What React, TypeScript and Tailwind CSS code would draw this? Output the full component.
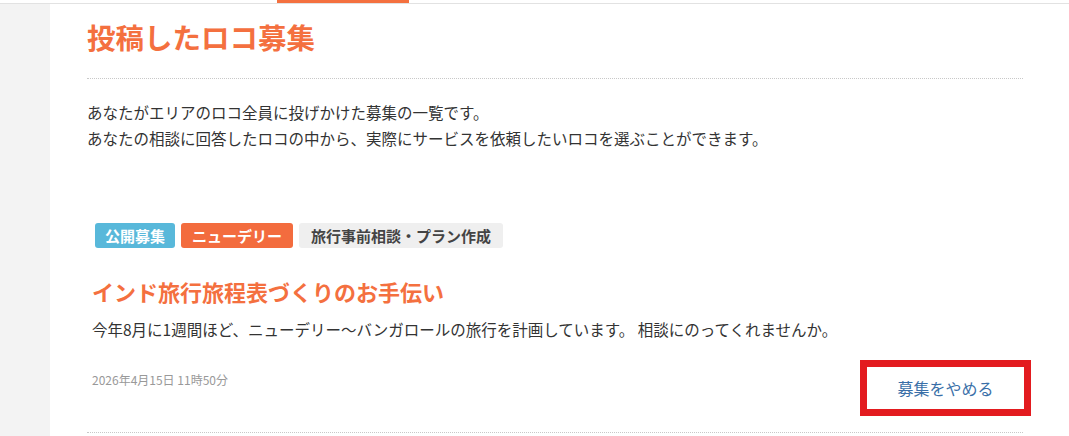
import { useState } from 'react';

type Post = {
  id: number;
  tags: { label: string; kind: 'public' | 'area' | 'category' }[];
  title: string;
  body: string;
  postedAt: string;
};

const posts: Post[] = [
  {
    id: 1,
    tags: [
      { label: '公開募集', kind: 'public' },
      { label: 'ニューデリー', kind: 'area' },
      { label: '旅行事前相談・プラン作成', kind: 'category' },
    ],
    title: 'インド旅行旅程表づくりのお手伝い',
    body: '今年8月に1週間ほど、ニューデリー〜バンガロールの旅行を計画しています。 相談にのってくれませんか。',
    postedAt: '2026年4月15日 11時50分',
  },
];

const tagStyle = {
  public: 'bg-[#58b8da] text-white px-[10px]',
  area: 'bg-[#f36c3e] text-white px-[11px]',
  category: 'bg-[#efefef] text-[#444] px-[12px]',
};

export default function App() {
  const [items, setItems] = useState(posts);

  return (
    <div
      className="min-h-[436px] bg-white text-[#333]"
      style={{ fontFamily: '"Noto Sans CJK JP", "Noto Sans", sans-serif' }}
    >
      {/* タブ下線 */}
      <div className="h-[3px] flex">
        <div className="ml-[277px] w-[132px] bg-[#f4703f]" />
      </div>
      <div className="h-px bg-[#e2e2e2]" />

      <div className="flex">
        <aside className="w-[50px] shrink-0 bg-[#f3f3f3] min-h-[432px]" />

        <main className="flex-1 pl-[37px] pr-[46px]">
          <div className="pt-[12px] pb-[20px] border-b border-dotted border-[#c8c8c8]">
            <h1 className="text-[28.5px] leading-[42px] font-bold text-[#f4703f]">投稿したロコ募集</h1>
          </div>

          <div className="mt-[20px] text-[15.5px] leading-[26px] text-[#333]">
            <p>あなたがエリアのロコ全員に投げかけた募集の一覧です。</p>
            <p>あなたの相談に回答したロコの中から、実際にサービスを依頼したいロコを選ぶことができます。</p>
          </div>

          <div className="mt-[72px]">
            {items.map((post) => (
              <div key={post.id} className="pl-[5px] pb-[16px] border-b border-dotted border-[#c8c8c8]">
                <div className="flex gap-[6px] pl-[3px]">
                  {post.tags.map((tag) => (
                    <span
                      key={tag.label}
                      className={`h-[25px] rounded-[3px] text-[15px] leading-[25px] font-bold ${tagStyle[tag.kind]}`}
                    >
                      {tag.label}
                    </span>
                  ))}
                </div>

                <h2 className="mt-[27px] text-[22px] leading-[32px] font-bold text-[#f4703f]">{post.title}</h2>
                <p className="mt-[9px] text-[15.5px] leading-[26px] text-[#333]">{post.body}</p>

                <div className="mt-[18px] flex items-start justify-between">
                  <span className="mt-[12px] text-[12px] leading-[16px] text-[#999]">{post.postedAt}</span>
                  <button
                    onClick={() => setItems(items.filter((p) => p.id !== post.id))}
                    className="w-[171px] h-[56px] mr-[-8px] border-[7px] border-[#e31b1f] bg-white text-[16px] text-[#3a6fa8]"
                  >
                    募集をやめる
                  </button>
                </div>
              </div>
            ))}
          </div>
        </main>
      </div>
    </div>
  );
}
